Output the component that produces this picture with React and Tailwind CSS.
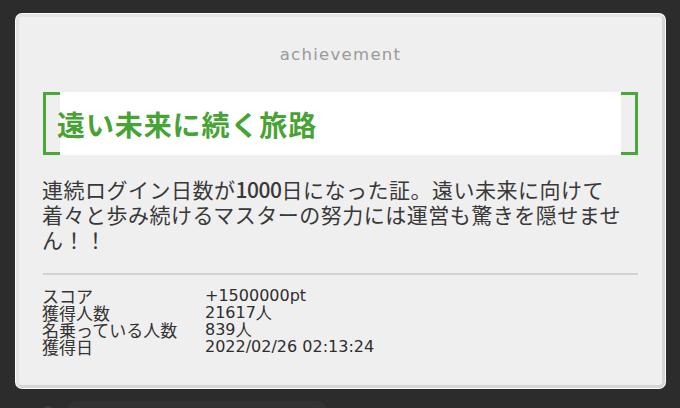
const jp = "font-['Noto_Sans_CJK_JP','Noto_Sans',sans-serif]";

const stats = [
  ["スコア", "+1500000pt"],
  ["獲得人数", "21617人"],
  ["名乗っている人数", "839人"],
  ["獲得日", "2022/02/26 02:13:24"],
];

function Bracket({ side }) {
  const cls =
    side === "left"
      ? "border-l-[3px] border-t-[3px] border-b-[3px]"
      : "border-r-[3px] border-t-[3px] border-b-[3px]";
  return <div className={`w-[17px] shrink-0 border-[#4aa83a] ${cls}`} />;
}

export default function App() {
  return (
    <div className={`h-[408px] w-[680px] overflow-hidden bg-[#2c2c2c] pt-[13px] pl-[15px] ${jp}`}>
      <div className="h-[376px] w-[651px] rounded-[7px] bg-[#fafafa] p-px">
        <div className="flex h-full flex-col rounded-[6px] border-[3px] border-[#e4e4e4] border-r-[#d6d6d6] border-b-[#d6d6d6] bg-[#efefef] px-[24px] pt-[28px]">
          <div className="text-center font-['DejaVu_Sans',sans-serif] text-[16.5px] leading-[20px] tracking-[1.3px] text-[#9a9a9a]">
            achievement
          </div>

          <div className="mt-[27px] flex h-[63px]">
            <Bracket side="left" />
            <div className="flex flex-1 items-center bg-white">
              <span className="-ml-[3px] text-[28px] font-bold leading-none tracking-[0.9px] text-[#47a334]">
                遠い未来に続く旅路
              </span>
            </div>
            <Bracket side="right" />
          </div>

          <p className="mt-[22px] -ml-[1px] whitespace-nowrap text-[21px] leading-[25px] tracking-[0.5px] text-[#383838]">
            連続ログイン日数が<span className="font-medium tracking-[-0.5px]">1000</span>日になった証。遠い未来に向けて
            <br />
            着々と歩み続けるマスターの努力には運営も驚きを隠せませ
            <br />
            ん！！
          </p>

          <div className="mt-[21px] h-[2px] bg-[#d2d2d2]" />

          <div className="mt-[12px] grid grid-cols-[163px_1fr] -ml-[1px] text-[#333]">
            {stats.map(([k, v]) => (
              <div key={k} className="contents">
                <div className="text-[17px] leading-[17px]">{k}</div>
                <div className="font-['DejaVu_Sans',sans-serif] text-[16px] leading-[17px] text-[#2e2e2e]">{v}</div>
              </div>
            ))}
          </div>
        </div>
      </div>

      <div className="mt-[12px] flex items-center gap-[14px] pl-[28px]">
        <div className="h-[10px] w-[10px] rounded-full bg-[#3e3e3e]" />
        <div className="h-[20px] w-[260px] rounded-t-[10px] bg-[#323232]" />
      </div>
    </div>
  );
}
